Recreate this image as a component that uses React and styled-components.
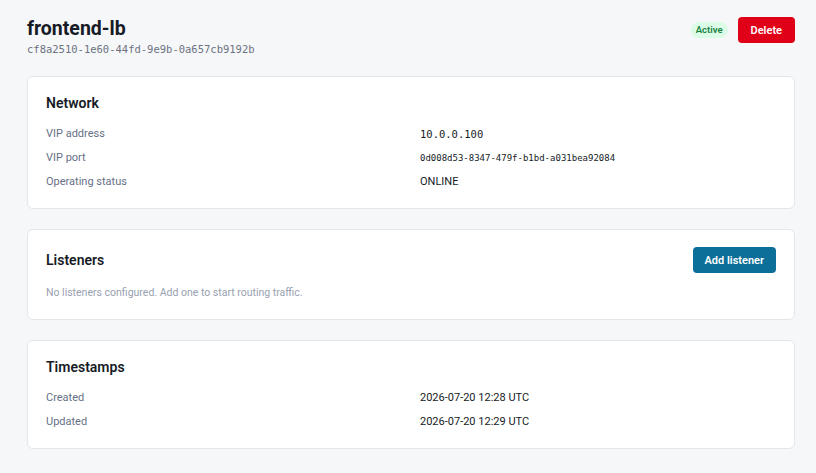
import styled, { createGlobalStyle } from 'styled-components'

const GlobalStyle = createGlobalStyle`
  body {
    margin: 0;
    background: #f6f7f9;
    font-family: "Roboto", "Noto Sans", sans-serif;
    color: #161b26;
  }
`

const Page = styled.div`
  padding: 17px 21px 27px 27px;
  display: flex;
  flex-direction: column;
  gap: 20px;
`

const PageHeader = styled.div`
  display: flex;
  justify-content: space-between;
  align-items: flex-start;
`

const Title = styled.h1`
  margin: 0;
  font-size: 19.5px;
  line-height: 24px;
  font-weight: 700;
  color: #161b26;
`

const Mono = styled.div`
  font-family: "DejaVu Sans Mono", "Liberation Mono", monospace;
  font-size: ${(p) => p.size || 11}px;
  line-height: 16px;
  color: ${(p) => p.color || '#161b26'};
`

const Uuid = styled(Mono)`
  margin-top: 1px;
  line-height: 14px;
`

const Actions = styled.div`
  display: flex;
  align-items: center;
  gap: 10px;
`

const Badge = styled.span`
  background: #dcfce7;
  color: #15803d;
  font-size: 9.5px;
  font-weight: 600;
  line-height: 16px;
  padding: 0 5px;
  border-radius: 8px;
`

const Button = styled.button`
  border: none;
  border-radius: 4px;
  height: 26px;
  padding: 0 ${(p) => p.pad || 12}px;
  background: ${(p) => p.bg};
  color: #fff;
  font-family: inherit;
  font-size: 11px;
  font-weight: 600;
  cursor: pointer;
`

const Card = styled.section`
  background: #fff;
  border: 1px solid #e3e6eb;
  border-radius: 6px;
  padding: 17px 18px 18px;
`

const CardHeader = styled.div`
  display: flex;
  justify-content: space-between;
  align-items: center;
`

const CardTitle = styled.h2`
  margin: 0;
  font-size: 14px;
  line-height: 19px;
  font-weight: 600;
  color: #161b26;
`

const Rows = styled.div`
  margin-top: 13px;
  display: grid;
  grid-template-columns: 1fr 1fr;
  column-gap: 18px;
  row-gap: 8px;
  align-items: center;
`

const Label = styled.div`
  font-size: 11px;
  line-height: 16px;
  color: #667085;
`

const Value = styled.div`
  font-size: 11px;
  line-height: 16px;
  color: #161b26;
`

const Empty = styled.p`
  margin: 12px 0 0;
  font-size: 10.5px;
  line-height: 16px;
  color: #98a1b0;
`

const App = () => {
  return (
    <>
      <GlobalStyle />
      <Page>
        <PageHeader>
          <div>
            <Title>frontend-lb</Title>
            <Uuid size={10.5} color="#6b7280">cf8a2510-1e60-44fd-9e9b-0a657cb9192b</Uuid>
          </div>
          <Actions>
            <Badge>Active</Badge>
            <Button bg="#e00018" pad={13}>Delete</Button>
          </Actions>
        </PageHeader>

        <Card>
          <CardTitle>Network</CardTitle>
          <Rows>
            <Label>VIP address</Label>
            <Mono size={10.5}>10.0.0.100</Mono>
            <Label>VIP port</Label>
            <Mono size={9}>0d008d53-8347-479f-b1bd-a031bea92084</Mono>
            <Label>Operating status</Label>
            <Value>ONLINE</Value>
          </Rows>
        </Card>

        <Card>
          <CardHeader>
            <CardTitle>Listeners</CardTitle>
            <Button bg="#0b6f99" pad={12}>Add listener</Button>
          </CardHeader>
          <Empty>No listeners configured. Add one to start routing traffic.</Empty>
        </Card>

        <Card>
          <CardTitle>Timestamps</CardTitle>
          <Rows>
            <Label>Created</Label>
            <Value>2026-07-20 12:28 UTC</Value>
            <Label>Updated</Label>
            <Value>2026-07-20 12:29 UTC</Value>
          </Rows>
        </Card>
      </Page>
    </>
  )
}

export default App
